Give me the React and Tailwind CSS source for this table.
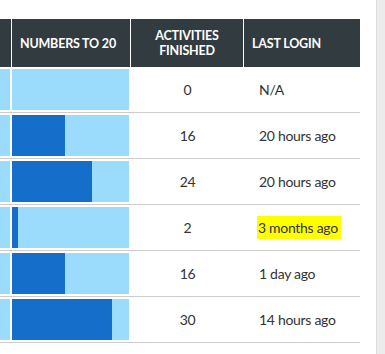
import React from 'react';

const rows = [
  { fill: 0, count: 0, login: 'N/A' },
  { fill: 53, count: 16, login: '20 hours ago' },
  { fill: 80, count: 24, login: '20 hours ago' },
  { fill: 6, count: 2, login: '3 months ago', marked: true },
  { fill: 53, count: 16, login: '1 day ago' },
  { fill: 100, count: 30, login: '14 hours ago' },
];

const Bar = ({ width, fill }) => (
  <div className="h-[41px] bg-[#9bdcfd]" style={{ width }}>
    <div className="h-full bg-[#156fca]" style={{ width: fill }} />
  </div>
);

const App = () => {
  return (
    <div className="flex h-[354px] w-[385px] bg-white font-['Lato',sans-serif] overflow-hidden">
      <div className="w-[360px] pt-[19px]">
        <div className="flex h-[48px] bg-[#313b40] text-[12.5px] font-bold uppercase text-white leading-[15px] tracking-[-0.2px]">
          <div className="w-[12px] border-r border-white" />
          <div className="flex w-[119px] items-center border-r border-white pl-[8px]">Numbers to 20</div>
          <div className="flex w-[113px] items-center justify-center border-r border-white text-center">
            Activities<br />Finished
          </div>
          <div className="flex w-[116px] items-center pl-[8px]">Last login</div>
        </div>
        {rows.map((r, i) => (
          <div key={i} className="flex h-[46px] border-b border-[#cccccc] text-[14px] tracking-[-0.3px] text-[#333333]">
            <div className="w-[12px] py-[2px] pr-[2px]">
              <Bar width={10} fill={0} />
            </div>
            <div className="w-[119px] py-[2px] pr-[2px]">
              <Bar width={117} fill={r.fill} />
            </div>
            <div className="flex w-[113px] items-center justify-center">{r.count}</div>
            <div className="flex w-[116px] items-center pl-[15px]">
              {r.marked ? (
                <span className="bg-[#ffff00] pl-[1px] pr-[3px] -ml-[2px] py-[1px]">{r.login}</span>
              ) : (
                r.login
              )}
            </div>
          </div>
        ))}
      </div>
      <div className="w-[16px]" />
      <div className="w-[9px] border-l border-[#dcdcdc] bg-[#ececec]" />
    </div>
  );
};

export default App;
